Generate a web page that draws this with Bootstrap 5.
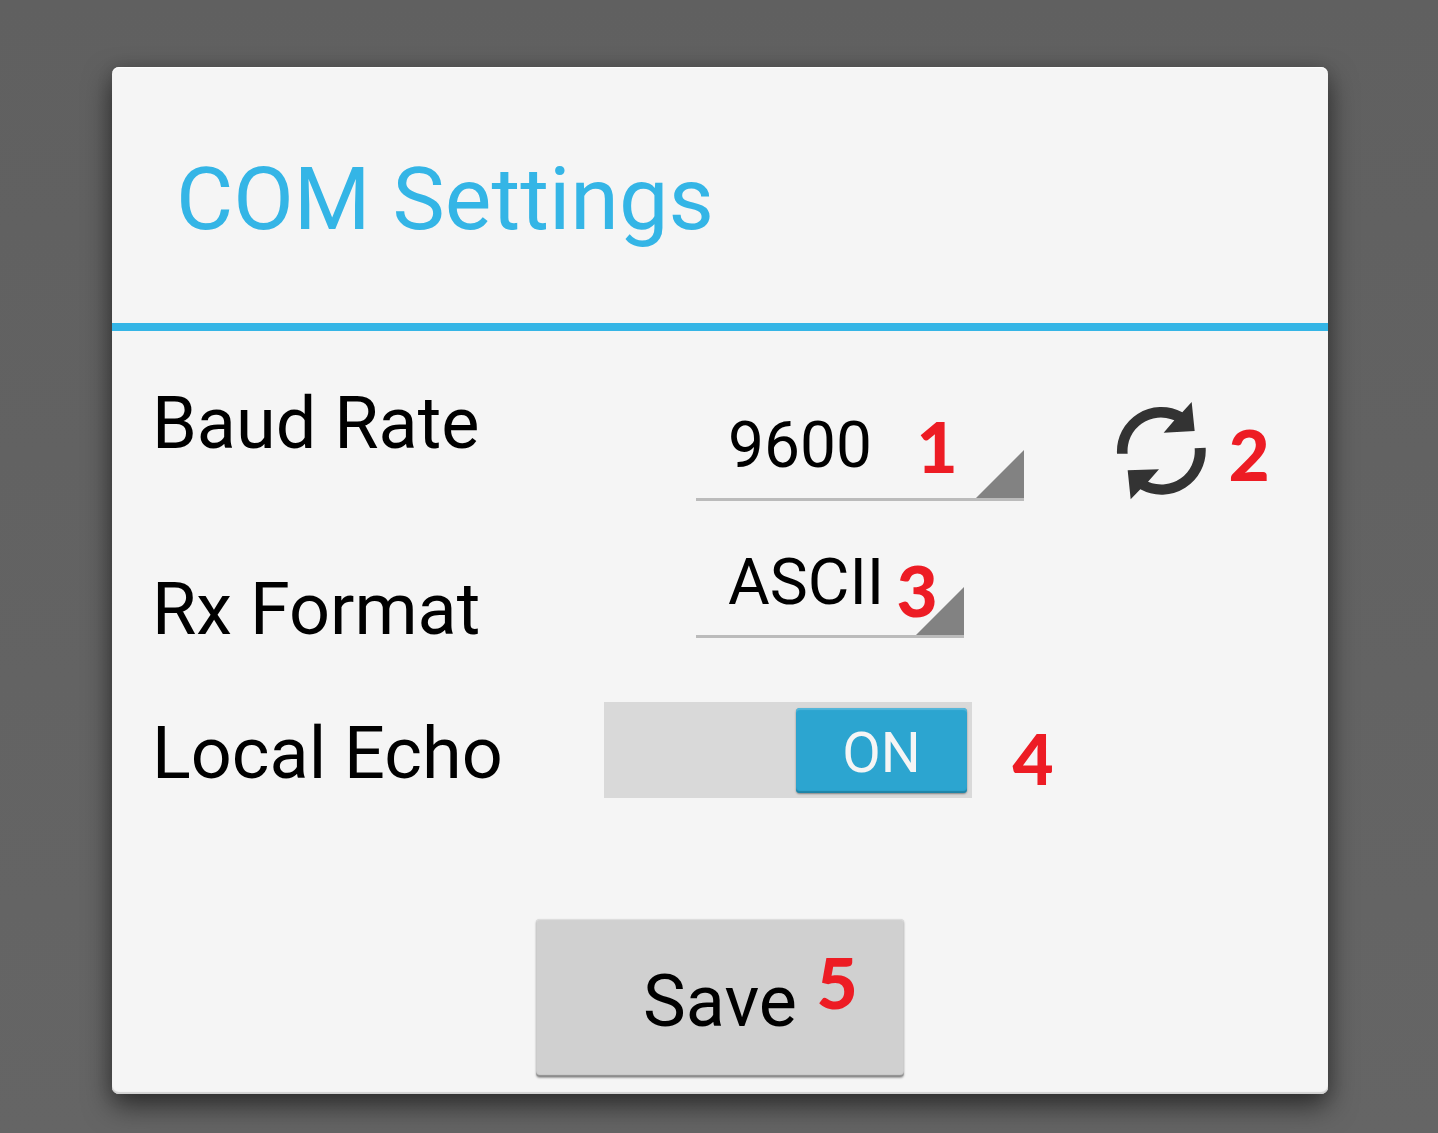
<!DOCTYPE html>
<html lang="en">
<head>
<meta charset="utf-8">
<meta name="viewport" content="width=device-width, initial-scale=1">
<title>COM Settings</title>
<link href="https://cdn.jsdelivr.net/npm/bootstrap@5.3.0/dist/css/bootstrap.min.css" rel="stylesheet">
<style>
body{height:1133px;padding:67px 110px 0 112px;overflow:hidden;font-family:Roboto,sans-serif;color:#000;background:linear-gradient(#606060,#656565)}
.com-dialog{width:1216px;height:1027px;background:#f5f5f5;border-radius:7px;box-shadow:0 12px 28px rgba(0,0,0,.55),0 2px 16px rgba(0,0,0,.12),inset 0 1px 1px #fff,inset 0 -2px 1px #d2d2d2}
.com-head{height:264px;border-bottom:8px solid #34b5e6;padding:80px 0 0 64px}
.com-title{font-size:88px;line-height:104px;color:#34b5e6;font-weight:400}
.com-label{font-size:72px;line-height:84px;white-space:nowrap}
.row-baud{height:170px}.row-rx{height:137px}.row-echo{height:160px}
.row-baud .com-label{margin:51px 0 0 40px;width:544px}
.row-rx .com-label{margin:67px 0 0 40px;width:544px}
.row-echo .com-label{margin:74px 0 0 40px;width:452px}
.spin{height:94px;border-bottom:3px solid #bbb;padding:1px 0 0 32px;font-size:64px;line-height:76px}
.spin svg{position:absolute;right:0;bottom:0;width:48px;height:48px}
.spin-baud{width:328px}.spin-rx{width:268px}
.refresh{width:92px;height:100px;margin:70px 0 0 92px}
.echo-switch{width:368px;height:96px;margin-top:64px;background:#d9d9d9;padding:6px 5px 5px}
.echo-thumb{width:171px;height:85px;background:#2ca5d0;border-radius:4px;color:#f5f5f5;font-size:56px;line-height:90px;box-shadow:inset 0 2px 1px #55b7da,inset 0 -2px 1px #1f83a6,0 1px 2px rgba(0,0,0,.4)}
.save-btn,.save-btn:hover{width:368px;height:158px;margin-top:121px;padding:8px 0 0;background:#d0d0d0;color:#000;border:0;border-radius:4px;font-size:72px;line-height:84px;box-shadow:inset 0 1px 1px #dedede,inset 0 -2px 1px #8d8d8d,0 1px 2px rgba(0,0,0,.35)}
/* numbered callouts laid over the controls */
.callout{position:absolute;font-family:Lato,sans-serif;font-weight:900;font-size:71px;line-height:70px;color:#ed1c24;width:42px;text-align:center}
.n1{left:916px;top:411px}.n2{left:1228px;top:419px}.n3{left:896px;top:555px}.n4{left:1012px;top:723px}.n5{left:816px;top:947px}
</style>
<script src="https://cdn.jsdelivr.net/npm/bootstrap@5.3.0/dist/js/bootstrap.bundle.min.js"></script>
</head>
<body class="position-relative">
<main class="com-dialog">
  <header class="com-head"><h1 class="com-title m-0">COM Settings</h1></header>
  <div class="row-baud d-flex align-items-start">
    <div class="com-label">Baud Rate</div>
    <div class="spin spin-baud position-relative align-self-end">9600<svg viewBox="0 0 48 48"><path fill="#828282" d="M48 0V48H0Z"/></svg></div>
    <svg class="refresh" viewBox="78 63 276 300" fill="#333"><path d="M81 221A133 133 0 0 1 277 97L305 66L314 153L221 158L253 121A100 100 0 0 0 113 221Z"/><path d="M347 203A133 133 0 0 1 151 328L122 358L113 271L207 268L174 305A100 100 0 0 0 314 205Z"/></svg>
  </div>
  <div class="row-rx d-flex align-items-start">
    <div class="com-label">Rx Format</div>
    <div class="spin spin-rx position-relative align-self-end">ASCII<svg viewBox="0 0 48 48"><path fill="#828282" d="M48 0V48H0Z"/></svg></div>
  </div>
  <div class="row-echo d-flex align-items-start">
    <div class="com-label">Local Echo</div>
    <div class="echo-switch d-flex justify-content-end" role="switch" aria-checked="true"><div class="echo-thumb text-center">ON</div></div>
  </div>
  <div class="d-flex justify-content-center"><button type="button" class="btn save-btn">Save</button></div>
</main>
<span class="callout n1">1</span><span class="callout n2">2</span><span class="callout n3">3</span><span class="callout n4">4</span><span class="callout n5">5</span>
</body>
</html>
